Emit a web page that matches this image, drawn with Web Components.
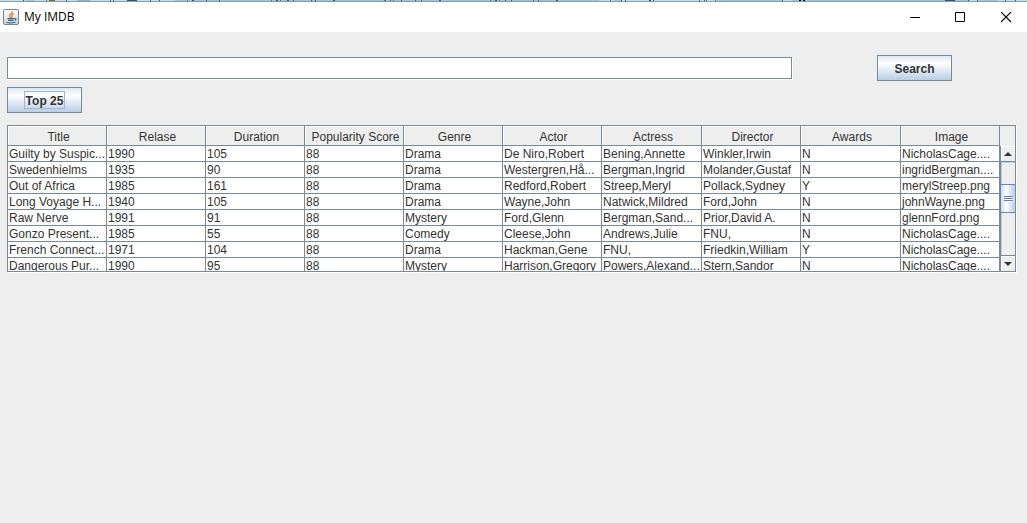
<!DOCTYPE html>
<html lang="en">
<head>
<meta charset="utf-8">
<title>My IMDB</title>
<style>
  html, body { margin: 0; min-height: 100%; background: #eeeeee; }
  body { font: 12px/15px "Liberation Sans", Arial, sans-serif; color: #333333; }
</style>
</head>
<body>
<imdb-window></imdb-window>

<script>
class TitleBar extends HTMLElement {
  constructor() {
    super();
    this.attachShadow({ mode: 'open' }).innerHTML = `
      <style>
        :host { display: block; background: #fff; color: #000; }
        .strip { display: block; width: 100%; height: 1px; background: #b1bfca; }
        .edge { height: 1px; background: #76a5c0; }
        .bar { display: flex; align-items: center; gap: 5px; height: 30px; padding-left: 3px; }
        .logo { width: 16px; height: 16px; flex: none; }
        h1 { margin: 0; flex: 1; font: 12px/16px "Open Sans", "Noto Sans", sans-serif; }
        button { width: 41px; height: 30px; padding: 0; border: 0; background: none; display: grid; place-items: center; }
        button svg { width: 11px; height: 11px; }
      </style>
      <svg class="strip" preserveAspectRatio="xMinYMin slice" viewBox="0 0 1027 1" shape-rendering="crispEdges" aria-hidden="true">
        <path fill="#d8d8d8" d="M0 0h175v1H0zM599 0h15v1h-15zM622 0h94v1h-94zM782 0h10v1h-10zM970 0h7v1h-7zM998 0h29v1h-29z"/>
        <path fill="#a9c4cb" d="M26 0h9v1H26z"/>
        <path fill="#aaaaaa" d="M77 0h13v1H77z"/>
        <path fill="#8a6420" d="M46 0h1v1H46zM49 0h6v1H49zM187 0h1v1h-1zM271 0h1v1h-1zM280 0h1v1h-1zM384 0h2v1h-2zM393 0h1v1h-1zM490 0h1v1h-1zM499 0h1v1h-1zM706 0h1v1h-1zM715 0h1v1h-1z"/>
        <path fill="#3d5064" d="M23 0h1v1H23zM66 0h1v1h-1zM110 0h1v1h-1zM113 0h1v1h-1zM127 0h10v1h-10zM150 0h1v1h-1zM159 0h1v1h-1zM192 0h2v1h-2zM206 0h1v1h-1zM219 0h1v1h-1zM276 0h2v1h-2zM287 0h2v1h-2zM293 0h1v1h-1zM311 0h1v1h-1zM315 0h1v1h-1zM333 0h2v1h-2zM390 0h1v1h-1zM401 0h1v1h-1zM415 0h1v1h-1zM421 0h1v1h-1zM439 0h2v1h-2zM495 0h2v1h-2zM505 0h1v1h-1zM511 0h1v1h-1zM533 0h1v1h-1zM538 0h1v1h-1zM556 0h2v1h-2zM610 0h1v1h-1zM621 0h1v1h-1zM625 0h1v1h-1zM649 0h2v1h-2zM653 0h1v1h-1zM699 0h1v1h-1zM704 0h1v1h-1zM782 0h1v1h-1zM945 0h10v1h-10zM968 0h1v1h-1zM977 0h1v1h-1zM1005 0h1v1h-1zM1015 0h1v1h-1z"/>
        <path fill="#000" d="M799 0h2v1h-2zM803 0h2v1h-2z"/>
      </svg>
      <div class="edge"></div>
      <div class="bar">
        <svg class="logo" viewBox="0 0 16 16" aria-hidden="true">
          <defs><linearGradient id="g" x2="0" y2="1"><stop stop-color="#fff"/><stop offset="1" stop-color="#c9d4dc"/></linearGradient></defs>
          <rect x=".5" y=".5" width="15" height="15" rx="1.5" fill="url(#g)" stroke="#6f8797"/>
          <path d="M9.500 2.500C9.800 4.300 6.200 5 6.500 6.800 6.700 7.700 7.700 8 7.500 9M11 4.700C9 5.400 8.400 6.200 9 7.200 9.300 7.800 9 8.400 8.600 8.900" fill="none" stroke="#e8812d" stroke-width="1.300"/>
          <path d="M4.500 9.600h6.500M5 11.400h5.500M3.500 13.300c2 .6 6 .6 9-.1M11.300 9.600c2.300-.6 2.200 1.300.2 1.800" fill="none" stroke="#44687f" stroke-width="1.100"/>
        </svg>
        <h1><slot></slot></h1>
        <button type="button" aria-label="Minimize"><svg viewBox="0 0 11 11"><path d="M1 5.500h10" stroke="#000"/></svg></button>
        <button type="button" aria-label="Maximize"><svg viewBox="0 0 11 11"><path d="M.5.5h9v9h-9z" fill="none" stroke="#000"/></svg></button>
        <button type="button" aria-label="Close"><svg viewBox="0 0 11 11"><path d="M0 0l10 10M10 0l-10 10" stroke="#000" stroke-width="1.100"/></svg></button>
      </div>`;
  }
}
customElements.define('title-bar', TitleBar);

class MetalButton extends HTMLElement {
  constructor() {
    super();
    this.attachShadow({ mode: 'open' }).innerHTML = `
      <style>
        :host { display: block; width: 75px; }
        button {
          display: grid; place-items: center; box-sizing: border-box; width: 100%; height: 26px; padding: 0;
          border: 1px solid #7a8a99; color: #333;
          background: linear-gradient(#dde8f3, #fff 30%, #fff 32%, #b8cfe5);
          font: bold 12px/13px "Liberation Sans", Arial, sans-serif;
        }
        span { padding: 3px 1px 0; border: 1px solid transparent; }
        :host([focused]) span { border-color: #a3b8cc; }
      </style>
      <button type="button"><span><slot></slot></span></button>`;
  }
}
customElements.define('metal-button', MetalButton);

class SearchField extends HTMLElement {
  constructor() {
    super();
    this.attachShadow({ mode: 'open' }).innerHTML = `
      <style>
        :host { display: block; }
        input {
          display: block; box-sizing: border-box; width: 100%; height: 22px; padding: 0 2px;
          border: 1px solid #7a8a99; border-radius: 0; outline: 0; background: #fff;
          box-shadow: 1px 1px #fff; font: inherit; color: inherit;
        }
      </style>
      <input type="text" aria-label="Search movies">`;
  }
}
customElements.define('search-field', SearchField);

class MetalScrollbar extends HTMLElement {
  constructor() {
    super();
    this.attachShadow({ mode: 'open' }).innerHTML = `
      <style>
        :host { display: flex; flex-direction: column; box-sizing: border-box; border-left: 1px solid #7a8a99; background: #eee; }
        button {
          flex: none; display: grid; place-items: center; width: 100%; height: 16px; padding: 0;
          border: 0 solid #7a8a99; background: #eee; box-shadow: inset 1px 1px #fff;
        }
        .up { border-bottom-width: 1px; }
        .down { border-top-width: 1px; }
        svg { width: 8px; height: 4px; }
        .track { flex: 1; display: grid; grid-template-rows: 22fr 29px 42fr; box-shadow: inset 1px 1px #b8cfe5; }
        .thumb {
          grid-row: 2; display: grid; align-content: center; justify-content: center; gap: 1px;
          margin-left: -1px; border: 1px solid #6382bf; border-right: 0;
          background: linear-gradient(90deg, #c8dcf0, #fff 35%, #b8cfe5);
        }
        i { width: 9px; height: 1px; background: #6382bf; box-shadow: 1px 1px #fff; }
      </style>
      <button class="up" type="button" aria-label="Scroll up"><svg viewBox="0 0 8 4"><path d="M0 4l4-4 4 4z" fill="#333"/></svg></button>
      <div class="track"><div class="thumb"><i></i><i></i><i></i></div></div>
      <button class="down" type="button" aria-label="Scroll down"><svg viewBox="0 0 8 4"><path d="M0 0l4 4 4-4z" fill="#333"/></svg></button>`;
  }
}
customElements.define('metal-scrollbar', MetalScrollbar);

const COLUMNS = ['Title', 'Relase', 'Duration', 'Popularity Score', 'Genre', 'Actor', 'Actress', 'Director', 'Awards', 'Image'];
const MOVIES = [
  ['Guilty by Suspic...', '1990', '105', '88', 'Drama', 'De Niro,Robert', 'Bening,Annette', 'Winkler,Irwin', 'N', 'NicholasCage....'],
  ['Swedenhielms', '1935', '90', '88', 'Drama', 'Westergren,Hå...', 'Bergman,Ingrid', 'Molander,Gustaf', 'N', 'ingridBergman....'],
  ['Out of Africa', '1985', '161', '88', 'Drama', 'Redford,Robert', 'Streep,Meryl', 'Pollack,Sydney', 'Y', 'merylStreep.png'],
  ['Long Voyage H...', '1940', '105', '88', 'Drama', 'Wayne,John', 'Natwick,Mildred', 'Ford,John', 'N', 'johnWayne.png'],
  ['Raw Nerve', '1991', '91', '88', 'Mystery', 'Ford,Glenn', 'Bergman,Sand...', 'Prior,David A.', 'N', 'glennFord.png'],
  ['Gonzo Present...', '1985', '55', '88', 'Comedy', 'Cleese,John', 'Andrews,Julie', 'FNU,', 'N', 'NicholasCage....'],
  ['French Connect...', '1971', '104', '88', 'Drama', 'Hackman,Gene', 'FNU,', 'Friedkin,William', 'Y', 'NicholasCage....'],
  ['Dangerous Pur...', '1990', '95', '88', 'Mystery', 'Harrison,Gregory', 'Powers,Alexand...', 'Stern,Sandor', 'N', 'NicholasCage....']
];

class MovieTable extends HTMLElement {
  constructor() {
    super();
    const head = COLUMNS.map(name => `<th scope="col">${name}</th>`).join('');
    const rows = MOVIES.map(movie => `<tr>${movie.map(value => `<td>${value}</td>`).join('')}</tr>`).join('');
    this.attachShadow({ mode: 'open' }).innerHTML = `
      <style>
        :host { display: flex; border: 1px solid #7a8a99; box-shadow: 1px 1px #fff; background: #fff; }
        .view { flex: 1; min-width: 0; height: 145px; overflow: hidden; }
        table { width: 100%; table-layout: fixed; border-collapse: separate; border-spacing: 0; }
        th, td { box-sizing: border-box; overflow: hidden; white-space: nowrap; border: 0 solid #7a8a99; border-width: 0 1px 1px 0; }
        th { width: 9.98%; height: 20px; padding: 3px 0 0 3px; background: #eee; box-shadow: inset 1px 1px #fff; font-weight: normal; text-align: center; }
        th:nth-child(7), th:nth-child(9) { width: 10.08%; }
        td { height: 16px; padding: 1px 0 0 1px; line-height: 14px; background: #fff; text-align: left; }
        .side { flex: none; width: 15px; display: flex; flex-direction: column; }
        .corner { height: 20px; background: #eee; }
        metal-scrollbar { flex: 1; }
      </style>
      <div class="view"><table><thead><tr>${head}</tr></thead><tbody>${rows}</tbody></table></div>
      <div class="side"><div class="corner"></div><metal-scrollbar></metal-scrollbar></div>`;
  }
}
customElements.define('movie-table', MovieTable);

class ImdbWindow extends HTMLElement {
  constructor() {
    super();
    this.attachShadow({ mode: 'open' }).innerHTML = `
      <style>
        :host { display: block; }
        main { display: flex; flex-direction: column; padding: 23px 11px 24px 7px; }
        form { display: flex; align-items: center; gap: 85px; margin: 0 64px 6px 0; }
        search-field { flex: 1; }
        movie-table { margin-top: 12px; }
      </style>
      <title-bar>My IMDB</title-bar>
      <main>
        <form><search-field></search-field><metal-button>Search</metal-button></form>
        <metal-button focused>Top 25</metal-button>
        <movie-table></movie-table>
      </main>`;
  }
}
customElements.define('imdb-window', ImdbWindow);
</script>
</body>
</html>
